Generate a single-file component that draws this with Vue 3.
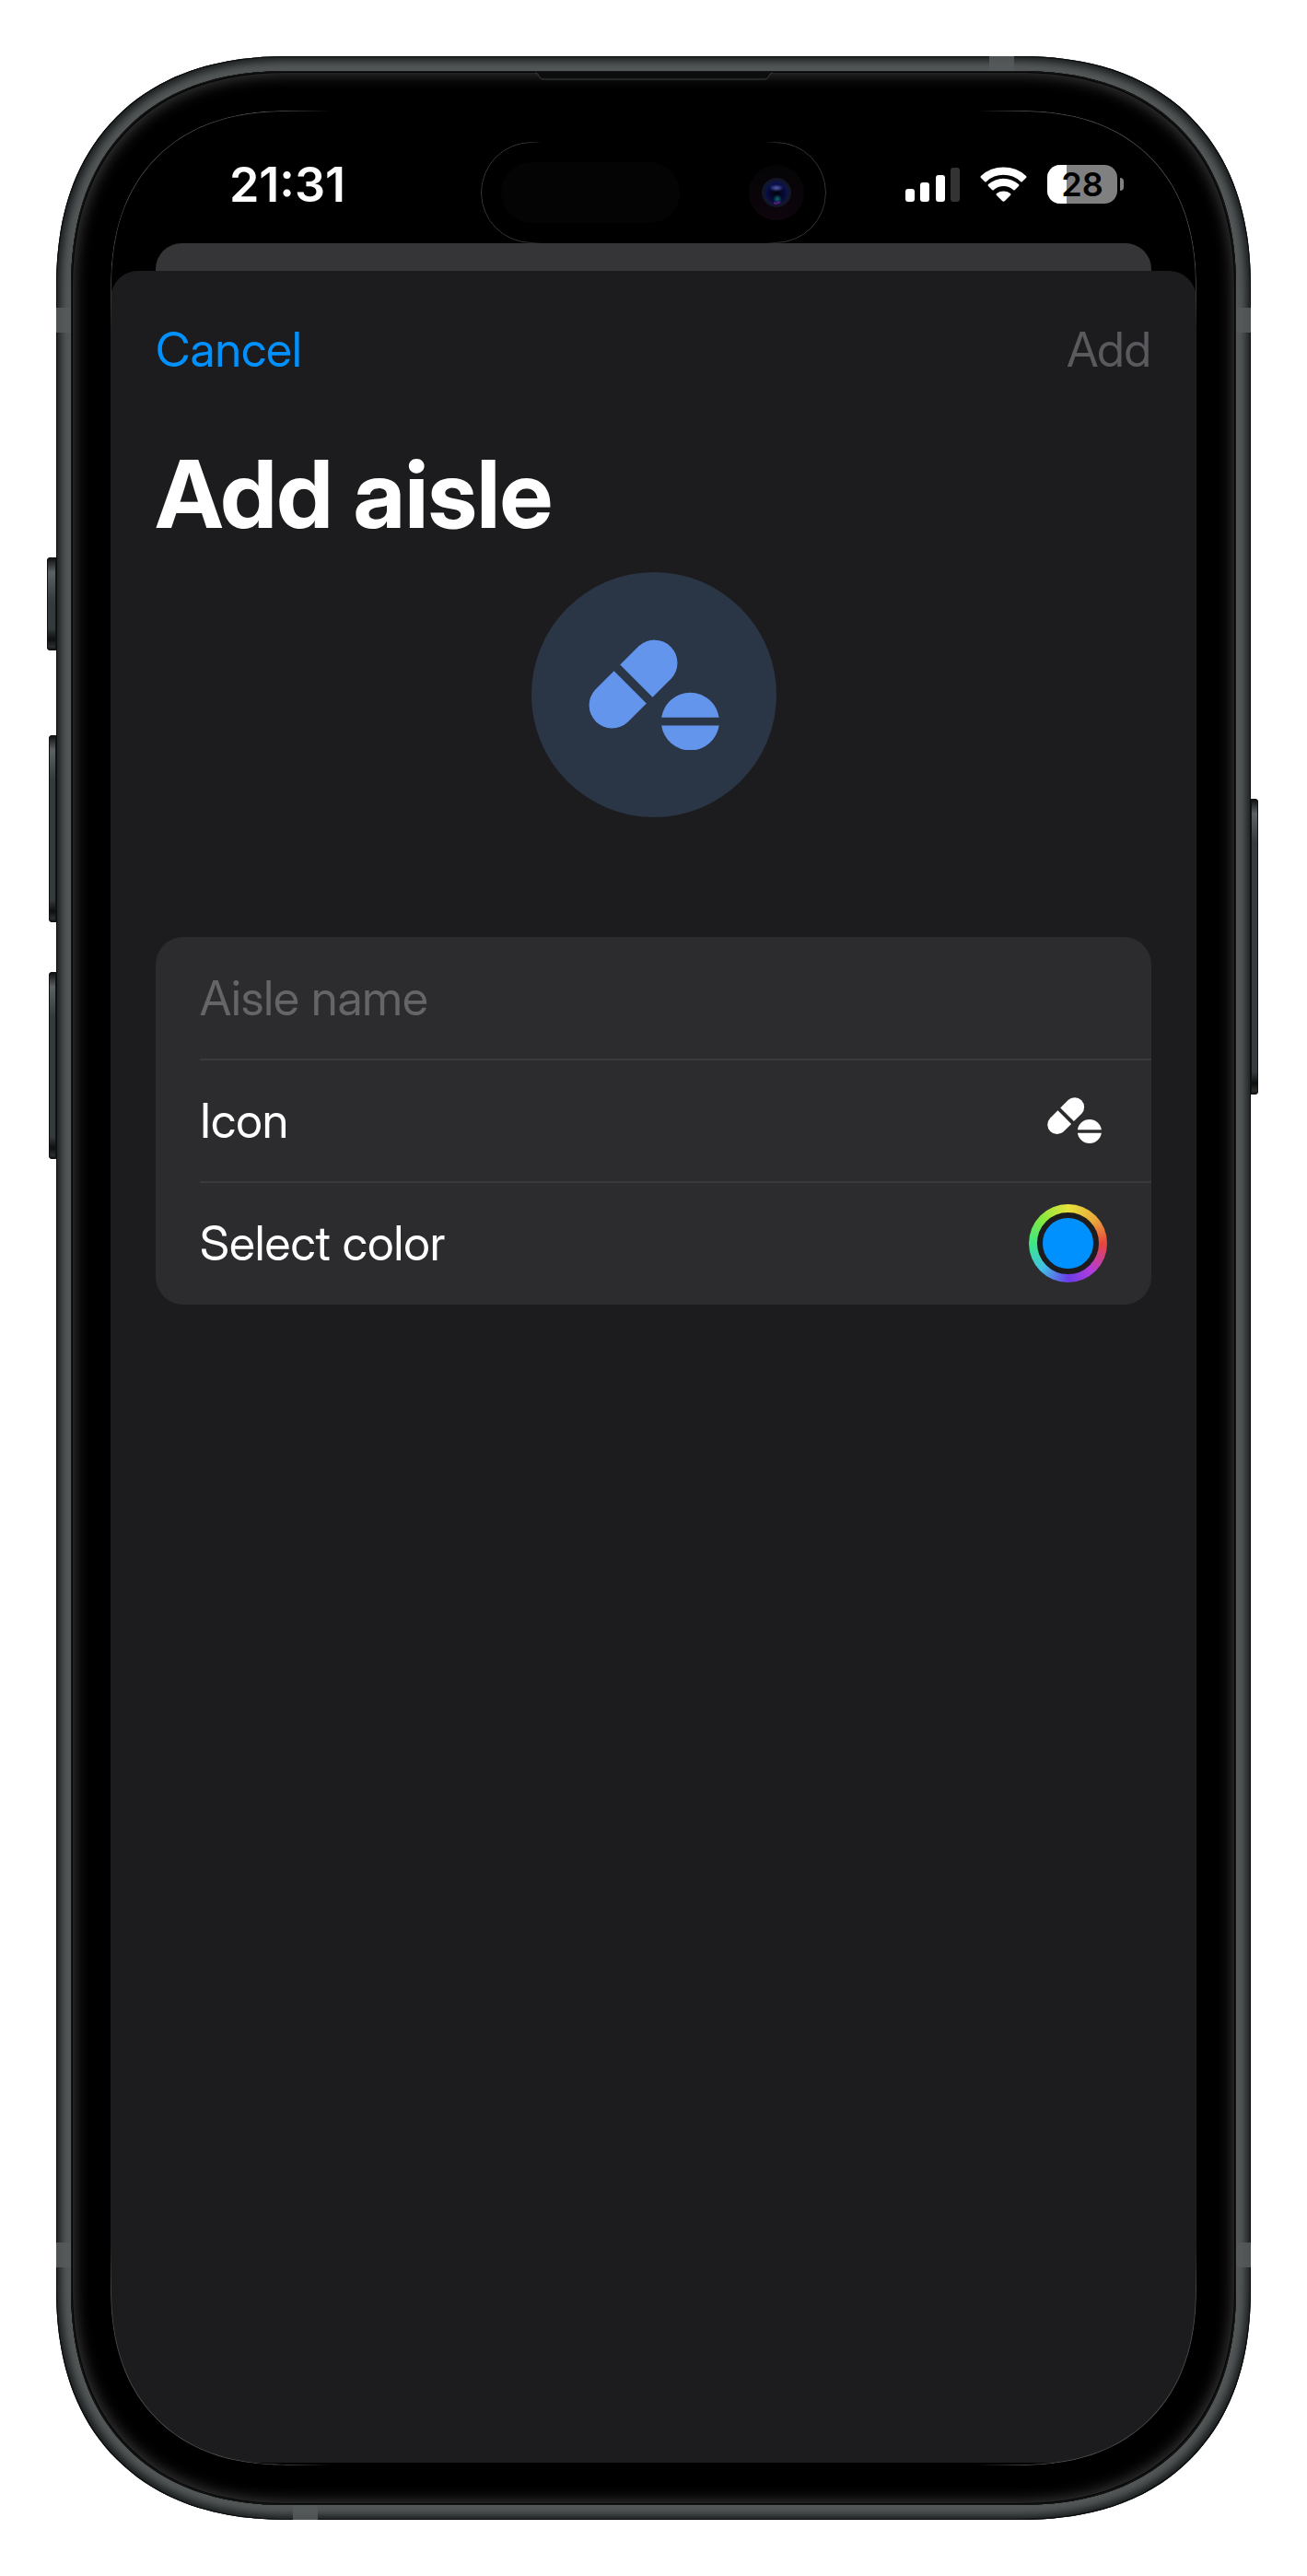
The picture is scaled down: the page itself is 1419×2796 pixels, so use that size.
<script setup>
import { ref } from 'vue'

const aisleName = ref('')
const color = ref('#0091ff')
const battery = 28

const bars = [
  { x: 0, y: 24, h: 14, on: true },
  { x: 16, y: 17, h: 21, on: true },
  { x: 33, y: 9, h: 29, on: true },
  { x: 49, y: 1, h: 37, on: false },
]

const hardware = [
  'key action-key', 'key volume-up', 'key volume-down', 'key power',
]
const bands = [
  'band left upper', 'band right upper', 'band left lower',
  'band right lower', 'band top', 'band bottom',
]

const pills = [
  'M103 83L164 22A75 75 0 0 1 270 128L209 189Z',
  'M83 103L22 164A75 75 0 0 0 128 270L189 209Z',
  'M238 255A95 95 0 0 1 426 255Z',
  'M238 281A95 95 0 0 0 426 281Z',
]
</script>

<template>
  <main class="page">
    <div class="phone">
      <span v-for="k in hardware" :key="k" :class="k"></span>
      <div class="rim">
        <span v-for="b in bands" :key="b" :class="b"></span>
        <div class="bezel">
          <svg class="speaker" viewBox="0 0 258 10" aria-hidden="true">
            <path d="M0 0C5 0 3 8 9 8H249C255 8 253 0 258 0Z" fill="#0c0d0d" />
            <path d="M0 1C5 1 3 8 9 8H249C255 8 253 1 258 1" fill="none" stroke="#3c3e3e" />
          </svg>
          <div class="screen">
            <header class="status">
              <time class="clock">21:31</time>
              <div class="island">
                <span class="sensor"></span>
                <svg class="camera" viewBox="0 0 60 60" aria-hidden="true">
                  <defs>
                    <linearGradient id="housing" x2="0" y2="1">
                      <stop stop-color="#040405" />
                      <stop offset="1" stop-color="#0e050d" />
                    </linearGradient>
                    <radialGradient id="lens" cy=".55">
                      <stop stop-color="#02020c" />
                      <stop offset=".7" stop-color="#060a35" />
                      <stop offset="1" stop-color="#0b1250" />
                    </radialGradient>
                    <radialGradient id="glint">
                      <stop stop-color="#5660b4" />
                      <stop offset="1" stop-color="#5660b4" stop-opacity="0" />
                    </radialGradient>
                    <radialGradient id="flare">
                      <stop stop-color="#0f6a70" />
                      <stop offset="1" stop-color="#0f6a70" stop-opacity="0" />
                    </radialGradient>
                  </defs>
                  <circle cx="30" cy="30" r="30" fill="url(#housing)" />
                  <circle cx="30" cy="30" r="16" fill="#12162a" />
                  <circle cx="30" cy="30" r="12" fill="url(#lens)" />
                  <ellipse cx="30" cy="25" rx="8" ry="4" fill="url(#glint)" />
                  <circle cx="31" cy="37" r="5" fill="url(#flare)" />
                  <path d="M27 41Q31 43 34 40" stroke="#5a1b80" stroke-width="2" fill="none" />
                </svg>
              </div>
              <div class="indicators">
                <svg class="signal" viewBox="0 0 59 38" aria-label="Signal">
                  <rect
                    v-for="b in bars" :key="b.x" :x="b.x" :y="b.y" width="10" :height="b.h" rx="3"
                    :fill="b.on ? '#fff' : '#333'"
                  />
                </svg>
                <svg class="wifi" viewBox="0 0 51 38" aria-label="Wi-Fi">
                  <g fill="#fff">
                    <path d="M1 10Q0 11 1 12L5 16Q6 17 7 16A27 27 0 0 1 44 16Q45 17 46 16L50 12Q51 11 50 10A36 36 0 0 0 1 10Z" />
                    <path d="M9 19Q8 20 9 21L13 25Q14 26 15 25A16 16 0 0 1 36 25Q37 26 38 25L42 21Q43 20 42 19A25 25 0 0 0 9 19Z" />
                    <path d="M18 29Q17 30 18 31L24 37Q25.500 38.500 27 37L33 31Q34 30 33 29A13 13 0 0 0 18 29Z" />
                  </g>
                </svg>
                <div class="battery">
                  <span class="cell">
                    <span class="charge" :style="{ width: battery + '%' }"></span>
                    <span class="level">{{ battery }}</span>
                  </span>
                  <span class="nub"></span>
                </div>
              </div>
            </header>

            <div class="behind"></div>

            <form class="sheet" @submit.prevent>
              <nav class="bar">
                <button type="button" class="cancel">Cancel</button>
                <button type="submit" class="add" :disabled="!aisleName">Add</button>
              </nav>
              <h1 class="title">Add aisle</h1>
              <div class="badge">
                <svg viewBox="0 0 427 363" aria-hidden="true">
                  <path v-for="d in pills" :key="d" :d="d" fill="currentColor" />
                </svg>
              </div>
              <div class="card">
                <div class="row">
                  <input
                    v-model="aisleName" class="name" type="text" placeholder="Aisle name"
                    aria-label="Aisle name"
                  />
                </div>
                <div class="row">
                  <label for="icon">Icon</label>
                  <button id="icon" type="button" class="pick">
                    <svg viewBox="0 0 427 363" aria-hidden="true">
                      <path v-for="d in pills" :key="d" :d="d" fill="currentColor" />
                    </svg>
                  </button>
                </div>
                <div class="row">
                  <label for="color">Select color</label>
                  <input id="color" v-model="color" class="well" type="color" />
                </div>
              </div>
            </form>
          </div>
        </div>
      </div>
    </div>
  </main>
</template>

<style>
body {
  background: #fff;
}
</style>

<style scoped>
* {
  box-sizing: border-box;
}

.page {
  padding: 61px;
  font-family: "Inter Display", Inter, "Liberation Sans", sans-serif;
  font-size: 52px;
  line-height: 60px;
  color: #fff;
}

button,
input {
  margin: 0;
  padding: 0;
  border: 0;
  background: none;
  font: inherit;
  color: inherit;
}

svg {
  display: block;
}

/* ---------- device ---------- */

.phone {
  position: relative;
}

.rim {
  position: relative;
  padding: 16px;
  overflow: hidden;
  border-radius: 222px;
  background: #545859;
  box-shadow: inset 0 0 0 1px #0b0d0e, inset 0 0 10px 5px #181b1c;
}

.bezel {
  position: relative;
  padding: 43px;
  border-radius: 206px;
  background: #000;
  box-shadow: inset 0 0 0 1px #161818, inset 0 0 0 2px #050505,
    inset 0 0 0 3px #232323, inset 0 0 16px 4px #3a3a3a;
}

.screen {
  position: relative;
  display: flex;
  flex-direction: column;
  aspect-ratio: 1179 / 2556;
  padding-bottom: 3px;
  overflow: hidden;
  border-radius: 162px;
  background: #000;
}

.screen::after {
  content: "";
  position: absolute;
  inset: 0;
  border: 1px solid #484848;
  border-radius: 162px;
  pointer-events: none;
  mask: radial-gradient(circle at 0 0, #000 180px, transparent 240px),
    radial-gradient(circle at 100% 0, #000 180px, transparent 240px),
    radial-gradient(circle at 0 100%, #000 180px, transparent 240px),
    radial-gradient(circle at 100% 100%, #000 180px, transparent 240px);
}

@supports (corner-shape: superellipse(1.2)) {
  .rim {
    border-radius: 252px;
    corner-shape: superellipse(1.2);
  }

  .bezel {
    border-radius: 236px;
    corner-shape: superellipse(1.2);
  }

  .screen,
  .screen::after {
    border-radius: 192px;
    corner-shape: superellipse(1.2);
  }
}

.speaker {
  position: absolute;
  top: 1px;
  left: 50%;
  width: 258px;
  height: 10px;
  transform: translateX(-50%);
}

.band {
  position: absolute;
  z-index: 1;
  background: #565b5c;
  opacity: 0.85;
}

.left,
.right {
  width: 16px;
  height: 27px;
}

.top,
.bottom {
  width: 27px;
  height: 16px;
}

.left { left: 0; }
.right { right: 0; }
.upper { top: 273px; }
.lower { bottom: 274px; }
.top { top: 0; right: 257px; }
.bottom { bottom: 0; left: 257px; }

.key {
  position: absolute;
  width: 8px;
  background: linear-gradient(#0b0c0d, #5c6164 16px, #353a3c 48px, #353a3c calc(100% - 24px), #0d0e0f calc(100% - 12px), #2b2e30 calc(100% - 4px), #0b0c0d);
  box-shadow: inset 0 0 0 1px #101213;
}

.action-key,
.volume-up,
.volume-down {
  right: 100%;
  border-radius: 4px 0 0 4px;
}

.action-key { top: 544px; width: 10px; height: 101px; }
.volume-up { top: 737px; height: 203px; }
.volume-down { top: 994px; height: 203px; }

.power {
  top: 806px;
  left: 100%;
  height: 321px;
  border-radius: 0 4px 4px 0;
}

/* ---------- status bar ---------- */

.status {
  display: grid;
  grid-template-columns: 1fr 375px 1fr;
  align-items: center;
  height: 144px;
  padding-top: 34px;
  font-family: Inter, "Liberation Sans", sans-serif;
}

.clock {
  margin-top: -16px;
  padding-right: 18px;
  font-weight: 600;
  text-align: center;
}

.island {
  position: relative;
  display: flex;
  align-items: center;
  justify-content: space-between;
  height: 110px;
  padding: 0 24px 0 22px;
  border-radius: 55px;
}

.island::after {
  content: "";
  position: absolute;
  inset: 0;
  border: 1px solid #383838;
  border-radius: 55px;
  mask: linear-gradient(90deg, #000 50px, transparent 66px, transparent calc(100% - 66px), #000 calc(100% - 50px));
}

.sensor {
  width: 194px;
  height: 66px;
  border-radius: 33px;
  background: #040404;
}

.camera {
  width: 60px;
  height: 60px;
}

.indicators {
  display: flex;
  align-items: center;
  gap: 22px;
  margin-top: -18px;
  padding-left: 86px;
}

.signal { width: 59px; height: 38px; }
.wifi { width: 51px; height: 38px; }

.battery {
  display: flex;
  align-items: center;
  gap: 3px;
}

.cell {
  position: relative;
  display: grid;
  place-items: center;
  width: 76px;
  height: 42px;
  overflow: hidden;
  border-radius: 14px;
  background: #808080;
}

.charge {
  position: absolute;
  inset: 0 auto 0 0;
  background: #fff;
}

.level {
  position: relative;
  font-size: 36px;
  line-height: 42px;
  font-weight: 600;
  color: #000;
}

.nub {
  width: 4px;
  height: 14px;
  border-radius: 0 7px 7px 0;
  background: #808080;
}

/* ---------- sheet ---------- */

.behind {
  height: 30px;
  margin: 0 49px;
  border-radius: 28px 28px 0 0;
  background: #353537;
}

.sheet {
  display: flex;
  flex: 1;
  flex-direction: column;
  padding: 0 49px;
  border-radius: 30px 30px 0 0;
  background: #1c1c1e;
}

.bar {
  display: flex;
  align-items: center;
  justify-content: space-between;
  height: 172px;
}

.cancel { color: #0091ff; }
.add { color: #5a5a5e; }

.title {
  margin: 10px 0 25px;
  font-size: 102px;
  line-height: 120px;
  font-weight: 700;
}

.badge {
  display: grid;
  place-items: center;
  align-self: center;
  width: 266px;
  height: 266px;
  margin-bottom: 130px;
  border-radius: 50%;
  background: #2a3546;
  color: #6495ed;
}

.badge svg {
  width: 142px;
}

.card {
  border-radius: 30px;
  background: #2c2c2e;
}

.row {
  position: relative;
  display: flex;
  align-items: center;
  justify-content: space-between;
  height: 133px;
  padding: 0 48px;
}

.row + .row::before {
  content: "";
  position: absolute;
  top: -1px;
  right: 0;
  left: 48px;
  height: 2px;
  background: #3a3a3c;
}

.name {
  flex: 1;
  min-width: 0;
  outline: 0;
}

.name::placeholder {
  color: #656569;
  opacity: 1;
}

.pick {
  padding: 0 6px;
}

.pick svg {
  width: 59px;
}

.well {
  width: 85px;
  height: 85px;
  padding: 9px;
  appearance: none;
  border-radius: 50%;
  background: conic-gradient(#e8e23c, #e9a63c 50deg, #e8453c 90deg, #b23cdc 140deg, #6a3ee8 180deg, #41bfe8 225deg, #3ce884 270deg, #8ae83c 315deg, #e8e23c);
}

.well::-webkit-color-swatch-wrapper {
  padding: 0;
}

.well::-webkit-color-swatch {
  border: 6px solid #1c1c1e;
  border-radius: 50%;
}
</style>
